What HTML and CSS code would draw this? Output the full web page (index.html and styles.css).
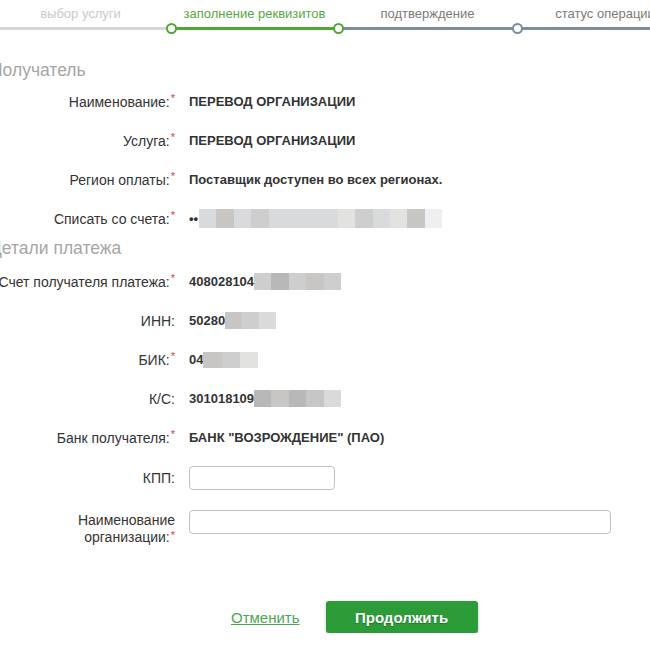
FILE: index.html
```html
<!DOCTYPE html>
<html lang="ru">
<head>
  <meta charset="UTF-8">
  <title>Заполнение реквизитов</title>
  <link rel="stylesheet" href="styles.css">
</head>
<body>
<div class="page">
  <div class="steps">
    <div class="step step-done">
      <div class="step-label">выбор услуги</div>
      <div class="step-track"></div>
    </div>
    <div class="step step-active">
      <div class="step-label">заполнение реквизитов</div>
      <div class="step-track"></div>
      <span class="step-dot"></span>
    </div>
    <div class="step step-next">
      <div class="step-label">подтверждение</div>
      <div class="step-track"></div>
      <span class="step-dot dot-green"></span>
    </div>
    <div class="step step-last">
      <div class="step-label">статус операции</div>
      <div class="step-track"></div>
      <span class="step-dot"></span>
    </div>
  </div>

  <!-- Получатель -->
  <h2 class="section-title">Получатель</h2>
  <div class="row">
    <div class="label">Наименование:<span class="req">*</span></div>
    <div class="value">ПЕРЕВОД ОРГАНИЗАЦИИ</div>
  </div>
  <div class="row">
    <div class="label">Услуга:<span class="req">*</span></div>
    <div class="value">ПЕРЕВОД ОРГАНИЗАЦИИ</div>
  </div>
  <div class="row">
    <div class="label">Регион оплаты:<span class="req">*</span></div>
    <div class="value">Поставщик доступен во всех регионах.</div>
  </div>
  <div class="row">
    <div class="label">Списать со счета:<span class="req">*</span></div>
    <div class="value">&bull;&bull;
      <span class="blur blur-card">
        <i class="g2"></i><i class="g4"></i><i class="g2"></i><i class="g3"></i><i class="g2"></i><i class="g2"></i><i class="g2"></i>
        <i class="g2"></i><i class="g1"></i><i class="g3"></i><i class="g2"></i><i class="g1"></i><i class="g4"></i><i class="g0"></i>
      </span>
    </div>
  </div>

  <!-- Детали платежа -->
  <h2 class="section-title second">Детали платежа</h2>
  <div class="row">
    <div class="label">Счет получателя платежа:<span class="req">*</span></div>
    <div class="value">408028104
      <span class="blur blur-acc"><i class="g3"></i><i class="g5"></i><i class="g3"></i><i class="g4"></i><i class="g3"></i></span>
    </div>
  </div>
  <div class="row">
    <div class="label">ИНН:</div>
    <div class="value">50280
      <span class="blur blur-inn"><i class="g4"></i><i class="g3"></i><i class="g2"></i></span>
    </div>
  </div>
  <div class="row">
    <div class="label">БИК:<span class="req">*</span></div>
    <div class="value">04
      <span class="blur blur-bik"><i class="g4"></i><i class="g3"></i><i class="g1"></i></span>
    </div>
  </div>
  <div class="row">
    <div class="label">К/С:</div>
    <div class="value">301018109
      <span class="blur blur-acc"><i class="g5"></i><i class="g4"></i><i class="g5"></i><i class="g4"></i><i class="g2"></i></span>
    </div>
  </div>
  <div class="row">
    <div class="label">Банк получателя:<span class="req">*</span></div>
    <div class="value">БАНК "ВОЗРОЖДЕНИЕ" (ПАО)</div>
  </div>

  <div class="row row-kpp">
    <div class="label">КПП:</div>
    <input type="text" class="field field-short">
  </div>
  <div class="row row-name">
    <div class="label label-wrap">Наименование<br>организации:<span class="req">*</span></div>
    <input type="text" class="field field-long">
  </div>

  <div class="actions">
    <a href="#" class="cancel">Отменить</a>
    <button class="btn">Продолжить</button>
  </div>
</div>
</body>
</html>
```

FILE: styles.css
```css
body {
  margin: 0;
  font-family: "Liberation Sans", Arial, sans-serif;
  background-color: #fff;
  color: #333;
  overflow: hidden;
}

.page {
  margin-left: -10px;
  width: 720px;
}

/* progress steps */
.steps {
  display: flex;
  height: 34px;
}

.step {
  position: relative;
  flex: none;
}

.step-done { width: 181px; }
.step-active { width: 167px; }
.step-next { width: 179px; }
.step-last { width: 176px; }

.step-label {
  text-align: center;
  font-size: 13px;
  line-height: 16px;
  padding-top: 6px;
  white-space: nowrap;
}

.step-track {
  position: absolute;
  left: 0;
  right: 0;
  top: 27px;
  height: 3px;
}

.step-done .step-label { color: #c9c9c9; }
.step-done .step-track { background-color: #d6d6d6; }
.step-active .step-label { color: #58a83e; }
.step-active .step-track { background-color: #52a537; }
.step-next .step-label,
.step-last .step-label { color: #7a7a7a; }
.step-next .step-track,
.step-last .step-track { background-color: #7b8c9b; }

.step-dot {
  position: absolute;
  left: -5px;
  top: 23px;
  width: 7px;
  height: 7px;
  border: 2px solid #7b8c9b;
  border-radius: 50%;
  background-color: #fff;
}

.step-active .step-dot,
.dot-green {
  border-color: #52a537;
}

/* sections */
.section-title {
  margin: 26px 0 2px;
  font-size: 17.5px;
  font-weight: normal;
  line-height: 20px;
  color: #a6a6a6;
}

.section-title.second {
  margin: 0 0 4px;
}

.row {
  display: grid;
  grid-template-columns: 185px 1fr;
  column-gap: 14px;
  height: 39px;
  align-items: center;
}

.label {
  text-align: right;
  font-size: 14px;
  white-space: nowrap;
}

.req {
  color: #e0393e;
  font-size: 11px;
  vertical-align: top;
  position: relative;
  top: -2px;
  margin-left: 1px;
}

.value {
  display: flex;
  align-items: center;
  font-size: 13px;
  font-weight: bold;
  white-space: nowrap;
}

/* blurred data */
.blur {
  display: flex;
  height: 18px;
}

.blur i {
  flex: 1;
}

.blur-card { width: 243px; height: 19px; margin-left: 1px; }
.blur-acc { width: 87px; height: 17px; }
.blur-inn { width: 51px; height: 17px; }
.blur-bik { width: 55px; height: 16px; }

.g0 { background-color: #efeff1; }
.g1 { background-color: #e2e2e1; }
.g2 { background-color: #d9dadb; }
.g3 { background-color: #cecece; }
.g4 { background-color: #c8c6c4; }
.g5 { background-color: #b8b8b8; }

/* inputs */
.row-kpp {
  height: 33px;
  padding-top: 9px;
  box-sizing: border-box;
}

.row-name {
  height: auto;
  margin-top: 20px;
  align-items: start;
}

.label-wrap {
  line-height: 17px;
  padding-top: 2px;
}

.field {
  height: 24px;
  box-sizing: border-box;
  border: 1px solid #b6c1cb;
  border-radius: 4px;
  background-color: #fff;
  justify-self: start;
}

.field-short { width: 146px; }
.field-long { width: 422px; }

/* buttons */
.actions {
  display: flex;
  align-items: center;
  gap: 26px;
  margin-top: 55px;
  padding-left: 241px;
}

.cancel {
  color: #4aa656;
  font-size: 15px;
  text-decoration: underline;
}

.btn {
  width: 152px;
  height: 32px;
  border: none;
  border-radius: 3px;
  background-color: #2b9c38;
  color: white;
  font-family: inherit;
  font-size: 15px;
  font-weight: bold;
  text-shadow: 0 1px 1px rgba(0,0,0,0.3);
  box-shadow: 0 2px 3px rgba(0,0,0,0.25);
  cursor: pointer;
}
```
